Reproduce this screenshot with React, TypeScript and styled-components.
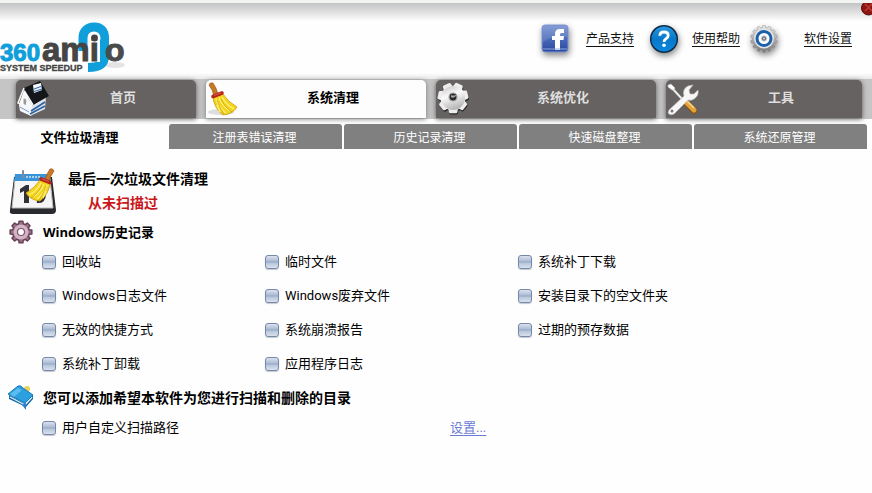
import React, { useEffect, useRef } from 'react';
import styled, { createGlobalStyle } from 'styled-components';

const GlobalStyle = createGlobalStyle`
  * { box-sizing: border-box; }
  body {
    margin: 0;
    background: #fefefe;
    color: #000;
    font-family: Roboto, "Noto Sans CJK SC", sans-serif;
    font-size: 13px;
    line-height: 20px;
  }
  button { font-family: inherit; }
  svg { display: block; flex: none; }
`;

const Page = styled.div`
  position: relative;
  min-height: 100vh;
  overflow: hidden;
  border-top: 3px solid #f1f4f1;
`;

const Header = styled.header`
  display: flex;
  justify-content: space-between;
  height: 76px;
  padding: 19px 20px 0 0;
  background: linear-gradient(#c3c4c6 0, #dcdcdd 8px, #fefefe 18px, #fefefe 70px, #e9e9e9 100%);
`;

const CloseButton = styled.button`
  position: absolute;
  top: 0;
  right: -4px;
  width: 15px;
  height: 13px;
  padding: 0;
  border: 0;
  overflow: hidden;
  background: none;
`;

const HelpLinks = styled.nav`
  display: flex;
  align-items: flex-start;
`;

const HelpLink = styled.a<{ $gap: number; $before: number }>`
  display: flex;
  align-items: center;
  height: 34px;
  gap: ${(p) => p.$gap}px;
  margin-left: ${(p) => p.$before}px;
  color: #111;
  font-size: 12px;
  text-underline-offset: 3px;
  svg { filter: drop-shadow(1px 3px 3px #0007); }
`;

const TabBar = styled.nav`
  display: grid;
  grid-template-columns: 180fr 220fr 220fr 196fr;
  gap: 10px;
  height: 40px;
  padding: 1px 10px 1px 16px;
  background: #c5c5c5;
`;

const Tab = styled.button<{ $active?: boolean }>`
  display: flex;
  align-items: center;
  padding: 0;
  border: 0;
  border-radius: 5px 5px 0 0;
  background: ${(p) => (p.$active ? '#fdfdfd' : '#666261')};
  color: ${(p) => (p.$active ? '#000' : '#dedede')};
  box-shadow: 0 1px 5px ${(p) => (p.$active ? '#777' : '#555')};
  font-size: 13px;
  font-weight: 700;
  line-height: 16px;
`;

const TabLabel = styled.span`
  flex: 1;
  padding-bottom: 2px;
  text-align: center;
`;

const SubTabBar = styled.nav`
  display: grid;
  grid-template-columns: 167fr 173fr 173fr 173fr 173fr;
  gap: 2px;
  height: 30px;
  padding: 5px 5px 0 0;
`;

const SubTab = styled.button<{ $active?: boolean }>`
  padding: 0 ${(p) => (p.$active ? 8 : 2)}px 0 0;
  border: 0;
  border-radius: 3px 3px 0 0;
  background: ${(p) => (p.$active ? 'none' : '#808080')};
  color: ${(p) => (p.$active ? '#000' : '#fff')};
  font-size: ${(p) => (p.$active ? 13 : 12)}px;
  font-weight: ${(p) => (p.$active ? 700 : 400)};
`;

const Content = styled.main`
  padding: 18px 0 0 8px;
`;

const LastScan = styled.section`
  display: flex;
  gap: 11px;
  height: 52px;
`;

const Title = styled.h2`
  margin: 0;
  font-size: 14px;
  font-weight: 700;
  line-height: 24px;
`;

const Status = styled.p`
  margin: 0;
  padding-left: 20px;
  color: #c9181b;
  font-size: 14px;
  font-weight: 700;
  line-height: 24px;
`;

const SectionHead = styled.div`
  display: flex;
  align-items: center;
  gap: 9px;
  height: 26px;
`;

const SectionTitle = styled(Title)`
  font-family: "Open Sans", "Noto Sans CJK SC", sans-serif;
  font-size: 13px;
`;

const Options = styled.div<{ $columns: string }>`
  display: grid;
  grid-template-columns: ${(p) => p.$columns};
  grid-auto-rows: 34px;
  align-items: center;
  padding-left: 34px;
`;

const PathSection = styled.section`
  padding-top: 4px;
`;

const OptionLabel = styled.label`
  display: flex;
  align-items: center;
  gap: 6px;
`;

const Tick = styled.input`
  appearance: none;
  width: 14px;
  height: 14px;
  margin: 0;
  border: 1px solid #7787a8;
  border-radius: 3px;
  background: linear-gradient(#dbe2ee 0, #a9b9d3 45%, #8094b6 50%, #b4c4da 56%, #d9e2ee 100%);
  box-shadow: 0 1px 1px #c3c8d2;
`;

const SetLink = styled.a`
  color: #6c7bd5;
  text-underline-offset: 3px;
`;

const gearPath = (teeth: number, outer: number, inner: number, c: number) => {
  const pts: string[] = [];
  const step = (Math.PI * 2) / teeth;
  for (let i = 0; i < teeth; i++) {
    [[-0.34, inner], [-0.22, outer], [0.22, outer], [0.34, inner]].forEach(([f, r]) => {
      const a = (i + f) * step - Math.PI / 2;
      pts.push(`${(c + r * Math.cos(a)).toFixed(2)} ${(c + r * Math.sin(a)).toFixed(2)}`);
    });
  }
  return `M${pts.join('L')}Z`;
};

const Logo = () => (
  <svg width="128" height="54" viewBox="0 0 128 54" role="img" aria-label="360 amigo System Speedup">
    <ellipse cx="115" cy="43" rx="10" ry="3" fill="#e4e4e4" />
    <path d="M83 29V16C83 9 88 5 94 5C101 5 104.500 9 104.500 16V34C104.500 42 100 45.500 88 45.500" fill="none" stroke="#109fda" strokeWidth="9" />
    <path d="M90 22V40H100V22" fill="#fff" />
    <circle cx="94.500" cy="16" r="6" fill="#fff" />
    <g fontFamily="Liberation Sans" fontWeight="700">
      <text x="0" y="39" fontSize="24" fill="#109fda" stroke="#109fda">360</text>
      <text x="42" y="39" fontSize="33" fill="#454545" stroke="#454545">ami</text>
      <text x="105" y="39" fontSize="32" fill="#4b4b4b" stroke="#4b4b4b">o</text>
      <text x="0" y="49" fontSize="9" fill="#444" stroke="#444" strokeWidth=".3">SYSTEM SPEEDUP</text>
    </g>
    <circle cx="94.500" cy="16" r="3.400" fill="#444" />
  </svg>
);

const FacebookIcon = () => (
  <svg width="30" height="30" viewBox="0 0 30 30">
    <defs>
      <linearGradient id="fb" x1="0" y1="0" x2="0" y2="1">
        <stop offset="0" stopColor="#7590cf" />
        <stop offset=".5" stopColor="#4a6ab9" />
        <stop offset="1" stopColor="#2948a0" />
      </linearGradient>
    </defs>
    <rect x="2" y="1" width="26" height="27" rx="3" fill="url(#fb)" stroke="#8299d2" />
    <path d="M3 2H27V13Q14 11 3 18Z" fill="#fff" opacity=".13" />
    <path d="M15 26V16H12V12H15V10Q15 5 20 5H24V9H21.500Q20 9 20 10.500V12H24L23.500 16H20V26Z" fill="#fff" />
    <path d="M3 25H27" stroke="#8ea8e0" />
  </svg>
);

const HelpIcon = () => (
  <svg width="30" height="30" viewBox="0 0 30 30">
    <defs>
      <linearGradient id="help" x1="0" y1="0" x2="0" y2="1">
        <stop offset="0" stopColor="#2a9ae0" />
        <stop offset=".5" stopColor="#0878c9" />
        <stop offset="1" stopColor="#0a8ae0" />
      </linearGradient>
    </defs>
    <circle cx="14" cy="15" r="13.300" fill="url(#help)" stroke="#122c48" strokeWidth="1.500" />
    <path d="M9.800 11.800Q10 8 14 8Q18.200 8 18.200 11.500Q18.200 13.500 16 14.800Q14 16 14 18" fill="none" stroke="#fff" strokeWidth="2.800" />
    <circle cx="14" cy="21.300" r="1.800" fill="#fff" />
  </svg>
);

const SettingsIcon = () => (
  <svg width="30" height="30" viewBox="0 0 30 30">
    <defs>
      <linearGradient id="metal" x1="0" y1="0" x2="0" y2="1">
        <stop offset="0" stopColor="#e6e6e6" />
        <stop offset="1" stopColor="#777" />
      </linearGradient>
    </defs>
    <g transform="translate(0 1)">
      <path d={gearPath(14, 13.5, 11.5, 14)} fill="url(#metal)" stroke="#999" strokeWidth=".5" />
      <circle cx="14" cy="13.500" r="10" fill="#e2e5e8" />
      <circle cx="14" cy="13.500" r="7" fill="#fff" stroke="#1d5fa8" strokeWidth="3" />
      <circle cx="14" cy="13.500" r="2.800" fill="#777" stroke="#cfd9e5" />
      <circle cx="14" cy="13.500" r="1" fill="#ccc" />
    </g>
  </svg>
);

const HomeIcon = () => (
  <svg width="34" height="36" viewBox="0 0 34 36">
    <path d="M3 24L8 9L18 27L15 35L4 30Z" fill="#f5f7fa" />
    <path d="M16 25L30 15L29 28L14 35Z" fill="#dfe5ec" />
    <path d="M15 30L29 21M14 33L29 25" fill="none" stroke="#2c62a0" strokeWidth="1.700" />
    <path d="M4 26L13 31" stroke="#7d9cc2" />
    <path d="M8 7L24 0L33 15L17 24L13 19Z" fill="#141619" />
    <path d="M8 7L2 22L4 23L9 11L17 24" fill="none" stroke="#f9f9f9" strokeWidth="1.500" />
    <path d="M17 4L25 2L26 9L18 12Z" fill="#f6f7f8" />
    <path d="M18 8L25 5.500M18 10.500L26 8" stroke="#3673b5" strokeWidth="1.200" />
    <path d="M7 17Q10 16 11 20L10 25L7 23Z" fill="#999" stroke="#fff" />
  </svg>
);

const BroomShape = () => (
  <>
    <path d="M3 4Q4 1 7 2Q10 6 12 13L8 15Q7 9 3 4Z" fill="#c87923" stroke="#9a5412" strokeWidth=".7" />
    <path d="M7 16L17 13Q22 21 31 26Q27 33 17 34Q8 27 7 16Z" fill="#f4d51d" stroke="#c69b0b" strokeWidth=".8" />
    <path d="M10 18Q13 27 20 32M13 17Q17 26 24 30M16 16Q20 24 28 28M11 24L14 31" fill="none" stroke="#fff27a" strokeWidth="1.300" />
    <path d="M11 19Q14 28 18 33M15 18Q19 27 26 31" fill="none" stroke="#c59a12" strokeWidth=".7" />
    <path d="M7 15.500L16 12" stroke="#b72219" strokeWidth="3.500" strokeLinecap="round" />
    <path d="M8 14.500L15 12" stroke="#e87561" strokeWidth=".7" />
  </>
);

const BroomIcon = () => (
  <svg width="34" height="36" viewBox="0 0 34 36">
    <ellipse cx="15" cy="31" rx="13" ry="3" fill="#ddd" />
    <BroomShape />
  </svg>
);

const CogIcon = () => (
  <svg width="34" height="36" viewBox="0 0 34 36">
    <defs>
      <linearGradient id="cog" x1="0" y1="0" x2="1" y2="1">
        <stop offset="0" stopColor="#bbb" />
        <stop offset=".4" stopColor="#fafafa" />
        <stop offset="1" stopColor="#999" />
      </linearGradient>
    </defs>
    <g transform="rotate(25 17 17)">
      <path d={gearPath(7, 14, 11, 17)} transform="translate(1 1)" fill="#252525" stroke="#252525" strokeWidth="3" strokeLinejoin="round" />
      <path d={gearPath(7, 14, 11, 17)} fill="#eee" stroke="#eee" strokeWidth="3" strokeLinejoin="round" />
      <circle cx="17" cy="17" r="12" fill="url(#cog)" />
    </g>
    <circle cx="17" cy="16" r="4" fill="#292929" stroke="#aaa" strokeWidth="1.200" />
    <path d="M15 16Q17 18 20 15V14Q17 15 15 14Z" fill="#aaa" />
  </svg>
);

const ToolsIcon = () => (
  <svg width="34" height="36" viewBox="0 0 34 36">
    <path d="M4 5L18 20" stroke="#eee" strokeWidth="2" />
    <path d="M2 4L5 3L9 7L8 9L6 9L2 6Z" fill="#fff" stroke="#bbb" strokeWidth=".5" />
    <path d="M19 21L28 30" stroke="#8a5310" strokeWidth="6" strokeLinecap="round" />
    <path d="M19 20L28 29" stroke="#e4a43a" strokeWidth="5" strokeLinecap="round" />
    <path d="M20 19L28 27" stroke="#ffd78a" strokeWidth="1.300" />
    <path d="M3 29L18 15Q16 8 22 5L27 4L23 9L24 13L28 13L32 9Q33 15 28 18Q25 20 22 19L8 33Q4 35 2 32Z" fill="#f7f7f7" stroke="#bdbdbd" strokeWidth=".7" />
    <circle cx="6" cy="30" r="1.500" fill="#777" />
  </svg>
);

const CalendarIcon = () => (
  <svg width="49" height="50" viewBox="0 0 49 50">
    <path d="M6 10H44L48 43Q48 47 44 47H5Q1 47 2 43Z" fill="#292b2e" />
    <path d="M7 12H42L45 41H4Z" fill="#f6f6f6" stroke="#bbb" />
    <path d="M7 7H42L43 14H6Z" fill="#3b94d5" />
    <path d="M18 10H32" stroke="#a6d4f5" strokeWidth="2" strokeDasharray="2 1" />
    <path d="M15 4V10" stroke="#889" strokeWidth="2" strokeLinecap="round" />
    <path d="M12 22L18 18H21V36H16V24L12 26Z" fill="#303236" />
    <path d="M29 34Q36 35 36 27" fill="none" stroke="#303236" strokeWidth="4" />
    <g transform="translate(49 0) scale(-1 1)">
      <BroomShape />
    </g>
  </svg>
);

const PurpleGear = () => (
  <svg width="26" height="26" viewBox="0 0 26 26">
    <path d={gearPath(8, 11, 8.5, 13)} fill="#9c7089" stroke="#634354" strokeWidth="1.500" strokeLinejoin="round" />
    <circle cx="13" cy="13" r="7.500" fill="#d5b3c7" />
    <circle cx="13" cy="13" r="3.500" fill="#fff" stroke="#7d566a" strokeWidth="1.200" />
  </svg>
);

const BookIcon = () => (
  <svg width="26" height="26" viewBox="0 0 26 26">
    <circle cx="19" cy="4" r="3" fill="#e8d258" />
    <path d="M1 10L18 19L25 10V14L18 22L1 14Z" fill="#156aa9" />
    <path d="M2 12L17 20L24 12" fill="none" stroke="#d7eefa" strokeWidth="1.300" />
    <path d="M0 9L10 1Q13 0 15 3L25 10L17 18Z" fill="#2b9fe0" stroke="#177bb9" />
    <path d="M2 9L10 3L14 5L6 12Z" fill="#71c9f2" opacity=".7" />
    <path d="M14 20L18 18L18 25Z" fill="#2d7fcc" />
  </svg>
);

const CloseOrb = () => (
  <svg width="15" height="13" viewBox="0 3 15 13">
    <circle cx="7.500" cy="8" r="7" fill="#8c1512" stroke="#5b0e0c" />
    <path d="M4 4L11 11M11 4L4 11" stroke="#b83a34" strokeWidth="1.500" />
  </svg>
);

const Option = ({ text }: { text: string }) => {
  const ref = useRef<HTMLInputElement>(null);
  useEffect(() => {
    if (ref.current) ref.current.indeterminate = true;
  }, []);
  return (
    <OptionLabel>
      <Tick ref={ref} type="checkbox" />
      {text}
    </OptionLabel>
  );
};

const helpLinks = [
  { text: '产品支持', Icon: FacebookIcon, gap: 16, before: 0 },
  { text: '使用帮助', Icon: HelpIcon, gap: 12, before: 16 },
  { text: '软件设置', Icon: SettingsIcon, gap: 24, before: 10 },
];

const tabs = [
  { text: '首页', Icon: HomeIcon },
  { text: '系统清理', Icon: BroomIcon, active: true },
  { text: '系统优化', Icon: CogIcon },
  { text: '工具', Icon: ToolsIcon },
];

const subTabs = ['文件垃圾清理', '注册表错误清理', '历史记录清理', '快速磁盘整理', '系统还原管理'];

const options = [
  '回收站', '临时文件', '系统补丁下载',
  'Windows日志文件', 'Windows废弃文件', '安装目录下的空文件夹',
  '无效的快捷方式', '系统崩溃报告', '过期的预存数据',
  '系统补丁卸载', '应用程序日志',
];

export default function App() {
  return (
    <Page>
      <GlobalStyle />
      <Header>
        <Logo />
        <HelpLinks>
          {helpLinks.map(({ text, Icon, gap, before }) => (
            <HelpLink key={text} href="#" $gap={gap} $before={before}>
              <Icon />
              <span>{text}</span>
            </HelpLink>
          ))}
        </HelpLinks>
      </Header>
      <CloseButton aria-label="关闭"><CloseOrb /></CloseButton>
      <TabBar>
        {tabs.map(({ text, Icon, active }) => (
          <Tab key={text} $active={active}>
            <Icon />
            <TabLabel>{text}</TabLabel>
          </Tab>
        ))}
      </TabBar>
      <SubTabBar>
        {subTabs.map((text, i) => (
          <SubTab key={text} $active={i === 0}>{text}</SubTab>
        ))}
      </SubTabBar>
      <Content>
        <LastScan>
          <CalendarIcon />
          <div>
            <Title>最后一次垃圾文件清理</Title>
            <Status>从未扫描过</Status>
          </div>
        </LastScan>
        <section>
          <SectionHead>
            <PurpleGear />
            <SectionTitle>Windows历史记录</SectionTitle>
          </SectionHead>
          <Options $columns="223fr 253fr 354fr">
            {options.map((text) => <Option key={text} text={text} />)}
          </Options>
        </section>
        <PathSection>
          <SectionHead>
            <BookIcon />
            <Title>您可以添加希望本软件为您进行扫描和删除的目录</Title>
          </SectionHead>
          <Options $columns="408fr 422fr">
            <Option text="用户自定义扫描路径" />
            <div><SetLink href="#">设置...</SetLink></div>
          </Options>
        </PathSection>
      </Content>
    </Page>
  );
}
